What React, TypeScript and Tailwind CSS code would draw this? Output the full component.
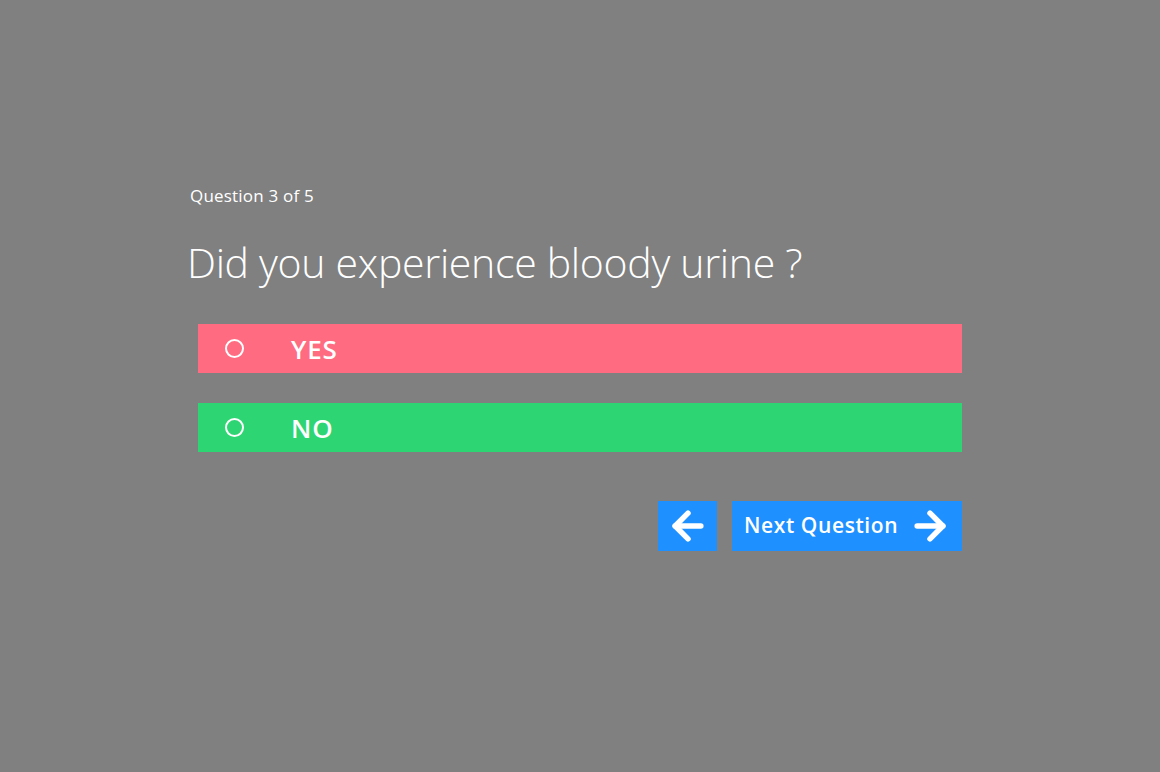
import { ArrowLeft, ArrowRight } from "lucide-react";

const options = [
  { label: "YES", color: "bg-[#ff6b81]" },
  { label: "NO", color: "bg-[#2ed573]" },
];

export default function App() {
  return (
    <div className="min-h-[772px] w-full bg-[#808080] text-white font-['Open_Sans',sans-serif]">
      <div className="mx-auto w-[786px] pt-[184px]">
        <p className="pl-[3px] text-[17px] leading-[24px] tracking-[0.2px]">Question 3 of 5</p>
        <h1 className="mt-[30px] text-[41px] font-light leading-[48px] tracking-[-0.3px]">
          Did you experience bloody urine ?
        </h1>

        <div className="mx-[11px] mt-[38px] flex flex-col gap-[30px]">
          {options.map((o) => (
            <button
              key={o.label}
              className={`flex h-[49px] items-center ${o.color} pl-[27px] text-left`}
            >
              <span className="h-[19px] w-[19px] rounded-full border-2 border-white" />
              <span className="ml-[47px] text-[26px] font-semibold leading-none tracking-[0.8px]">{o.label}</span>
            </button>
          ))}
        </div>

        <div className="mx-[11px] mt-[49px] flex justify-end gap-[15px]">
          <button className="flex h-[50px] w-[59px] items-center justify-center bg-[#1e90ff]">
            <ArrowLeft className="h-[44px] w-[44px]" strokeWidth={3} />
          </button>
          <button className="flex h-[50px] w-[230px] items-center justify-between bg-[#1e90ff] pl-[12px] pr-[10px]">
            <span className="text-[21px] font-semibold tracking-[0.6px]">Next Question</span>
            <ArrowRight className="h-[44px] w-[44px]" strokeWidth={3} />
          </button>
        </div>
      </div>
    </div>
  );
}
